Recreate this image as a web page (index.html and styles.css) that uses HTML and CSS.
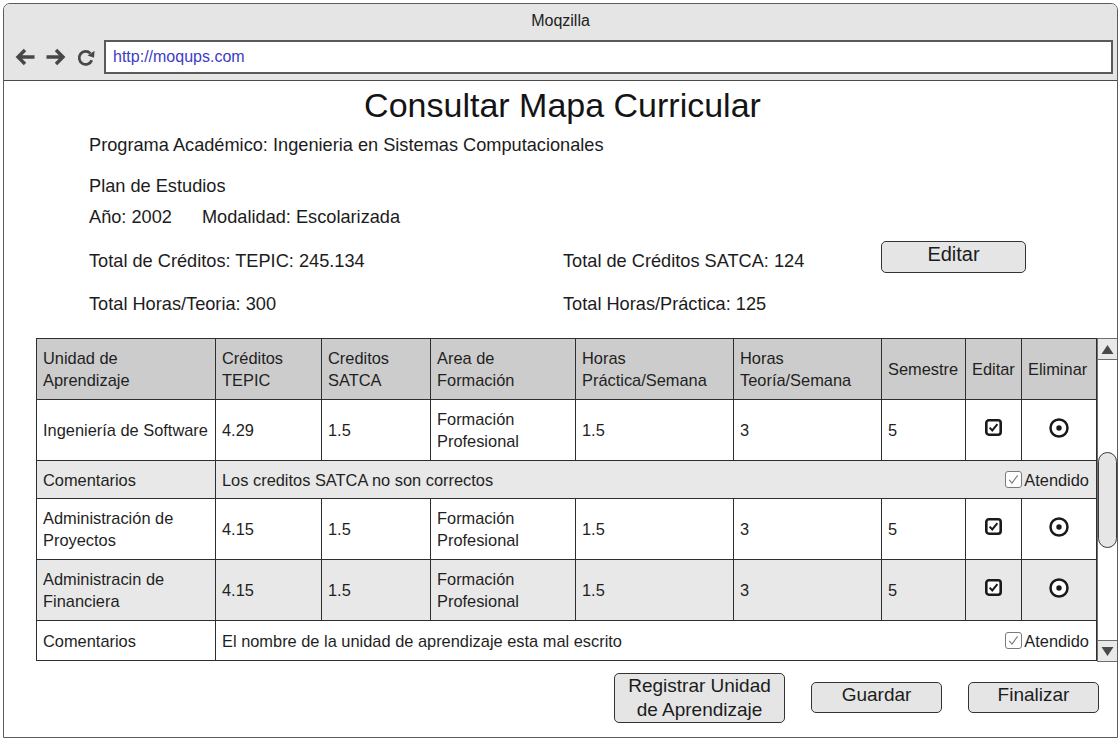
FILE: index.html
```html
<!DOCTYPE html>
<html lang="es">
<head>
<meta charset="utf-8">
<title>Consultar Mapa Curricular</title>
<link rel="stylesheet" href="styles.css">
</head>
<body>
<div class="window">
  <div class="titlebar">
    <div class="wtitle">Moqzilla</div>
    <div class="navrow">
      <svg class="nav-ico" width="22" height="20" viewBox="0 0 22 20"><path d="M20.5 10H4M11 3L4 10L11 17" fill="none" stroke="#474747" stroke-width="3.4" stroke-linejoin="miter"/></svg>
      <svg class="nav-ico" width="22" height="20" viewBox="0 0 22 20"><path d="M1.5 10H18M11 3L18 10L11 17" fill="none" stroke="#474747" stroke-width="3.4" stroke-linejoin="miter"/></svg>
      <svg class="nav-ico reload" width="20" height="20" viewBox="0 0 20 20"><path d="M15.8 13.2A6.5 6.5 0 1 1 14.4 6.4" fill="none" stroke="#474747" stroke-width="2.7"/><path d="M18.6 3.8L18 10.8L11.6 8.6Z" fill="#474747"/></svg>
      <div class="url">http://moqups.com</div>
    </div>
  </div>
  <div class="page">
    <h1 class="heading">Consultar Mapa Curricular</h1>
    <div class="info">
      <p class="line l-prog">Programa Académico: Ingenieria en Sistemas Computacionales</p>
      <p class="line l-plan">Plan de Estudios</p>
      <div class="line l-year"><span>Año: 2002</span><span class="modal">Modalidad: Escolarizada</span></div>
      <div class="row-totals">
        <span class="c1">Total de Créditos: TEPIC: 245.134</span>
        <span class="c2">Total de Créditos SATCA: 124</span>
        <button class="btn btn-edit">Editar</button>
      </div>
      <div class="row-hours">
        <span class="c1">Total Horas/Teoria: 300</span>
        <span class="c2">Total Horas/Práctica: 125</span>
      </div>
    </div>
    <div class="grid-wrap">
      <table class="units">
        <colgroup>
          <col class="w-unit"><col class="w-tepic"><col class="w-satca"><col class="w-area"><col class="w-hp"><col class="w-ht"><col class="w-sem"><col class="w-ed"><col class="w-el">
        </colgroup>
        <thead>
          <tr class="r-head">
            <th>Unidad de<br>Aprendizaje</th>
            <th>Créditos<br>TEPIC</th>
            <th>Creditos<br>SATCA</th>
            <th>Area de<br>Formación</th>
            <th>Horas<br>Práctica/Semana</th>
            <th>Horas<br>Teoría/Semana</th>
            <th>Semestre</th>
            <th>Editar</th>
            <th>Eliminar</th>
          </tr>
        </thead>
        <tbody>
          <tr class="r-data">
            <td>Ingeniería de Software</td>
            <td>4.29</td>
            <td>1.5</td>
            <td>Formación<br>Profesional</td>
            <td>1.5</td>
            <td>3</td>
            <td>5</td>
            <td class="ic"><svg width="17" height="17" viewBox="0 0 17 17"><rect x="1.3" y="1.3" width="14.4" height="14.4" rx="2.6" fill="#fff" stroke="#1a1a1a" stroke-width="2.6"/><path d="M4.6 8.6L7.3 11.4L12.4 5.2" fill="none" stroke="#1a1a1a" stroke-width="2"/></svg></td>
            <td class="ic"><svg width="20" height="20" viewBox="0 0 20 20"><circle cx="10" cy="10" r="8.5" fill="#fff" stroke="#1a1a1a" stroke-width="2.5"/><circle cx="10" cy="10" r="2.7" fill="#1a1a1a"/></svg></td>
          </tr>
          <tr class="r-comment alt">
            <td>Comentarios</td>
            <td colspan="8"><div class="cm"><span>Los creditos SATCA no son correctos</span><span class="att"><svg width="17" height="17" viewBox="0 0 17 17"><rect x="0.5" y="0.5" width="16" height="16" rx="2.5" fill="#fff" stroke="#7a7a7a"/><path d="M4.2 8.8L7 12L12.6 4.4" fill="none" stroke="#7a7a7a" stroke-width="1.1"/></svg>Atendido</span></div></td>
          </tr>
          <tr class="r-data">
            <td>Administración de<br>Proyectos</td>
            <td>4.15</td>
            <td>1.5</td>
            <td>Formación<br>Profesional</td>
            <td>1.5</td>
            <td>3</td>
            <td>5</td>
            <td class="ic"><svg width="17" height="17" viewBox="0 0 17 17"><rect x="1.3" y="1.3" width="14.4" height="14.4" rx="2.6" fill="#fff" stroke="#1a1a1a" stroke-width="2.6"/><path d="M4.6 8.6L7.3 11.4L12.4 5.2" fill="none" stroke="#1a1a1a" stroke-width="2"/></svg></td>
            <td class="ic"><svg width="20" height="20" viewBox="0 0 20 20"><circle cx="10" cy="10" r="8.5" fill="#fff" stroke="#1a1a1a" stroke-width="2.5"/><circle cx="10" cy="10" r="2.7" fill="#1a1a1a"/></svg></td>
          </tr>
          <tr class="r-data alt">
            <td>Administracin de<br>Financiera</td>
            <td>4.15</td>
            <td>1.5</td>
            <td>Formación<br>Profesional</td>
            <td>1.5</td>
            <td>3</td>
            <td>5</td>
            <td class="ic"><svg width="17" height="17" viewBox="0 0 17 17"><rect x="1.3" y="1.3" width="14.4" height="14.4" rx="2.6" fill="#fff" stroke="#1a1a1a" stroke-width="2.6"/><path d="M4.6 8.6L7.3 11.4L12.4 5.2" fill="none" stroke="#1a1a1a" stroke-width="2"/></svg></td>
            <td class="ic"><svg width="20" height="20" viewBox="0 0 20 20"><circle cx="10" cy="10" r="8.5" fill="#fff" stroke="#1a1a1a" stroke-width="2.5"/><circle cx="10" cy="10" r="2.7" fill="#1a1a1a"/></svg></td>
          </tr>
          <tr class="r-comment last">
            <td>Comentarios</td>
            <td colspan="8"><div class="cm"><span>El nombre de la unidad de aprendizaje esta mal escrito</span><span class="att"><svg width="17" height="17" viewBox="0 0 17 17"><rect x="0.5" y="0.5" width="16" height="16" rx="2.5" fill="#fff" stroke="#7a7a7a"/><path d="M4.2 8.8L7 12L12.6 4.4" fill="none" stroke="#7a7a7a" stroke-width="1.1"/></svg>Atendido</span></div></td>
          </tr>
        </tbody>
      </table>
      <div class="scrollbar">
        <div class="sb-btn"><svg width="13" height="11" viewBox="0 0 13 11"><path d="M6.5 1L12.5 10H0.5Z" fill="#4a4a4a"/></svg></div>
        <div class="sb-track"><div class="sb-thumb"></div></div>
        <div class="sb-btn"><svg width="13" height="11" viewBox="0 0 13 11"><path d="M6.5 10L12.5 1H0.5Z" fill="#4a4a4a"/></svg></div>
      </div>
    </div>
    <div class="actions">
      <button class="btn btn-reg">Registrar Unidad<br>de Aprendizaje</button>
      <button class="btn btn-small">Guardar</button>
      <button class="btn btn-small">Finalizar</button>
    </div>
  </div>
</div>
</body>
</html>
```

FILE: styles.css
```css
html, body {
  margin: 0;
  padding: 0;
  background: #ffffff;
}

body {
  font-family: "Liberation Sans", Arial, sans-serif;
  color: #1f1f1f;
}

.window {
  box-sizing: border-box;
  margin: 3px 2px 0 3px;
  width: 1115px;
  height: 735px;
  border: 1px solid #5c5c5c;
  border-radius: 7px 7px 0 0;
  overflow: hidden;
  background: #fff;
}

.titlebar {
  height: 76px;
  background: #e5e5e5;
  border-bottom: 1px solid #4a4a4a;
}

.wtitle {
  padding-top: 7px;
  font-size: 16px;
  line-height: 20px;
  text-align: center;
  color: #222;
}

.navrow {
  display: flex;
  align-items: center;
  margin-top: 9px;
  height: 34px;
  padding-left: 10px;
}

.nav-ico {
  flex: none;
  margin-right: 9px;
}

.nav-ico.reload {
  margin-right: 8px;
}

.url {
  box-sizing: border-box;
  flex: 1;
  height: 34px;
  margin-right: 4px;
  border: 2px solid #5a5a5a;
  background: #fff;
  padding-left: 7px;
  font-size: 16px;
  line-height: 30px;
  color: #3c3cc6;
}

.heading {
  margin: 4px 0 0 0;
  font-size: 34px;
  line-height: 40px;
  font-weight: normal;
  text-align: center;
  color: #141414;
  padding-left: 4px;
}

.info {
  padding-left: 85px;
  font-size: 18.2px;
  line-height: 22px;
  color: #1c1c1c;
}

.line {
  margin: 0;
}

.l-prog { margin-top: 9px; }
.l-plan { margin-top: 19px; }
.l-year { margin-top: 9px; display: flex; }
.modal { margin-left: 30px; }

.row-totals {
  display: flex;
  align-items: flex-start;
  margin-top: 13px;
  height: 32px;
}

.row-totals .c1,
.row-totals .c2 {
  margin-top: 9px;
}

.c1 { width: 474px; flex: none; }
.c2 { width: 318px; flex: none; }

.row-hours {
  display: flex;
  margin-top: 20px;
}

.btn {
  box-sizing: border-box;
  font-family: "Liberation Sans", Arial, sans-serif;
  background: #e5e5e5;
  border: 1px solid #333333;
  border-radius: 5px;
  color: #1c1c1c;
  padding: 0;
  margin: 0;
}

.btn-edit {
  width: 145px;
  height: 32px;
  font-size: 20px;
  line-height: 24px;
  padding-bottom: 6px;
}

.grid-wrap {
  display: flex;
  align-items: flex-start;
  margin-top: 23px;
  padding-left: 32px;
}

.units {
  flex: none;
  width: 1060px;
  table-layout: fixed;
  border-collapse: collapse;
  font-size: 16.4px;
  line-height: 22px;
  color: #1f1f1f;
}

.w-unit { width: 179px; }
.w-tepic { width: 106px; }
.w-satca { width: 109px; }
.w-area { width: 145px; }
.w-hp { width: 158px; }
.w-ht { width: 148px; }
.w-sem { width: 84px; }
.w-ed { width: 56px; }
.w-el { width: 75px; }

.units th,
.units td {
  border: 1px solid #2e2e2e;
  padding: 0 6px;
  text-align: left;
  font-weight: normal;
  vertical-align: middle;
}

.r-head th {
  background: #cccccc;
  height: 60px;
}

.r-data td {
  height: 60px;
  background: #fff;
}

.r-comment td {
  height: 37px;
  background: #fff;
}

.r-comment.last td {
  height: 39px;
}

.alt td {
  background: #e8e8e8;
}

.units td.ic {
  text-align: center;
  padding: 0;
  line-height: 0;
}

.units td.ic svg {
  display: inline-block;
  margin-top: -5px;
}

.cm {
  display: flex;
  justify-content: space-between;
  align-items: center;
  padding-right: 1px;
}

.att {
  display: flex;
  align-items: center;
  gap: 2px;
}

.scrollbar {
  box-sizing: border-box;
  flex: none;
  width: 21px;
  height: 324px;
  border: 1px solid #6e6e6e;
  display: flex;
  flex-direction: column;
  background: #fff;
}

.sb-btn {
  height: 20px;
  flex: none;
  display: flex;
  align-items: center;
  justify-content: center;
  background: #e9e9e9;
  border-bottom: 1px solid #6e6e6e;
}

.sb-btn:last-child {
  border-bottom: none;
  border-top: 1px solid #6e6e6e;
}

.sb-track {
  flex: 1;
  padding-top: 92px;
}

.sb-thumb {
  box-sizing: border-box;
  width: 19px;
  height: 96px;
  border: 1px solid #3a3a3a;
  border-radius: 10px;
  background: #e6e6e6;
}

.actions {
  display: flex;
  align-items: flex-start;
  justify-content: flex-end;
  margin-top: 11px;
  padding-right: 18px;
}

.btn-reg {
  width: 171px;
  height: 50px;
  font-size: 19px;
  line-height: 24px;
  padding-bottom: 2px;
}

.btn-small {
  width: 131px;
  height: 31px;
  margin-top: 9px;
  margin-left: 26px;
  font-size: 19px;
  line-height: 24px;
  padding-bottom: 5px;
}
```
